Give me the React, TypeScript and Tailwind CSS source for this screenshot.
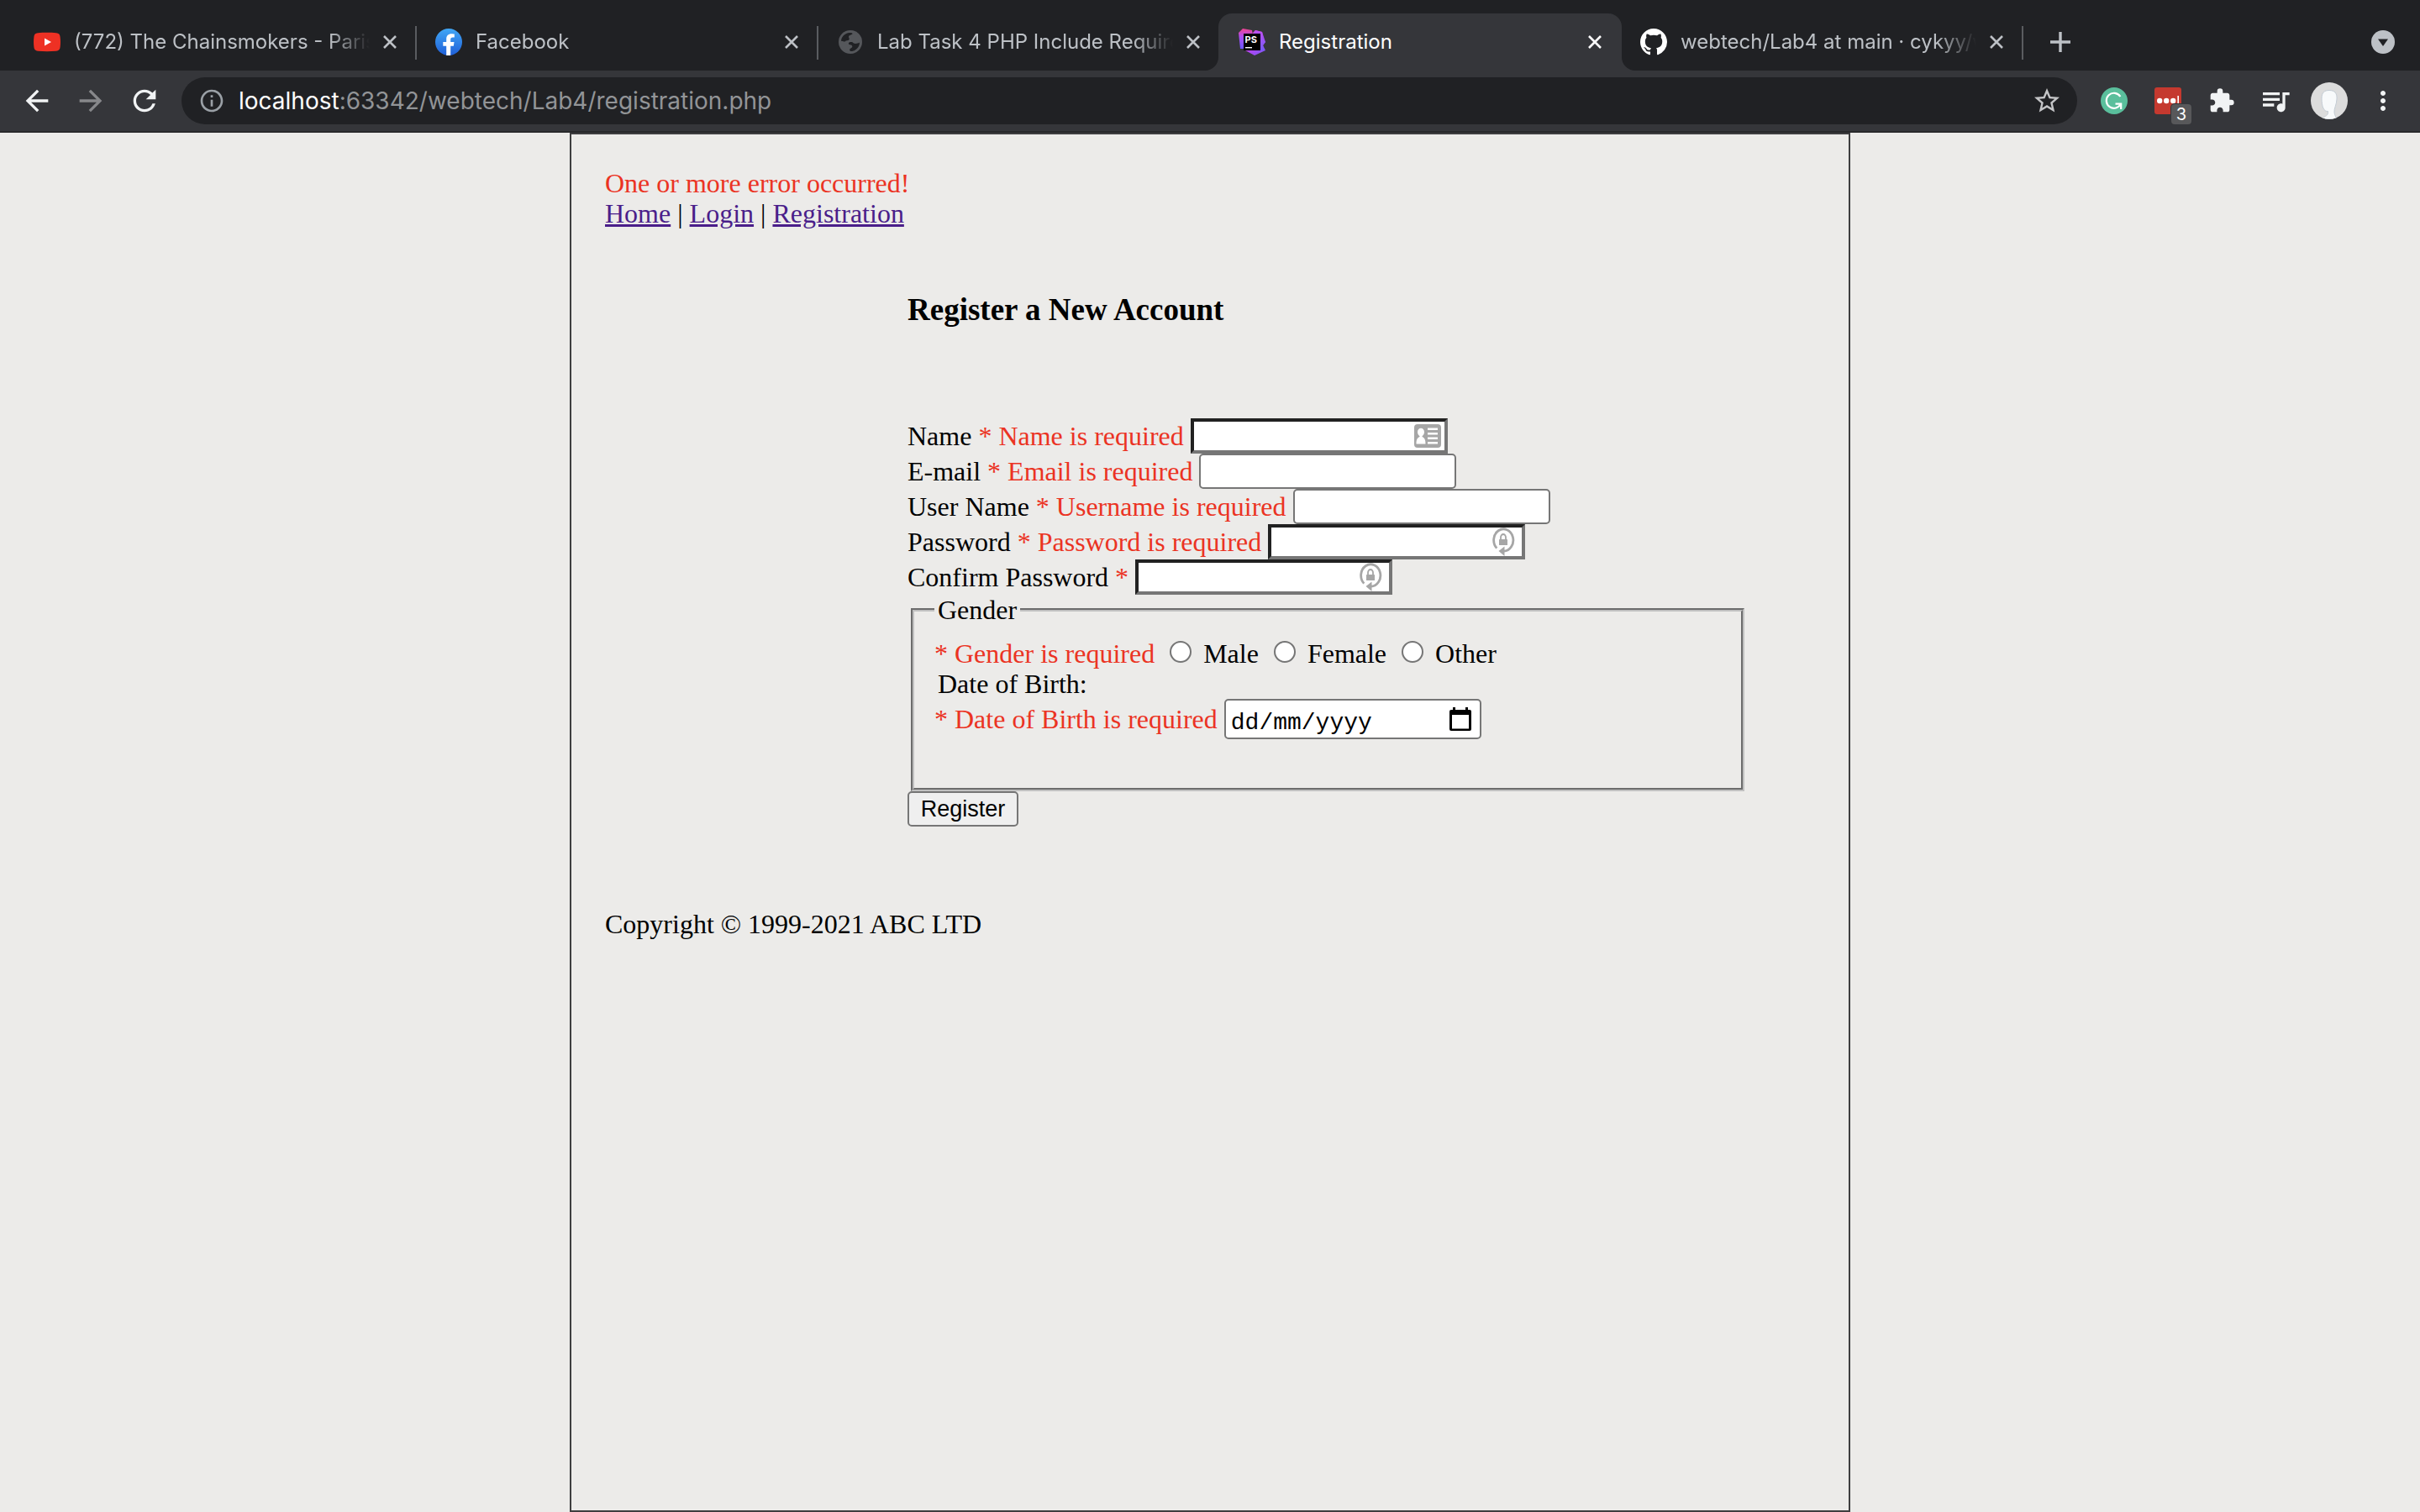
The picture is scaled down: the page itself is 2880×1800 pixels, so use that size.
import type { ReactNode } from "react";
import {
  MdArrowBack,
  MdArrowForward,
  MdRefresh,
  MdStarOutline,
  MdExtension,
  MdQueueMusic,
  MdMoreVert,
  MdInfoOutline,
} from "react-icons/md";

function CloseIcon() {
  return (
    <svg viewBox="0 0 16 16" className="size-4" fill="none" stroke="currentColor" strokeWidth="2.6">
      <path d="M1 1L15 15M15 1L1 15" />
    </svg>
  );
}

function YouTubeIcon() {
  return (
    <svg viewBox="0 0 32 32" className="size-8">
      <path
        fill="#ee3124"
        d="M5 5.3C12 4.7 20 4.7 27 5.3C30 5.6 31.3 7 31.6 10C32.1 14 32.1 18 31.6 22C31.3 25 30 26.4 27 26.7C20 27.3 12 27.3 5 26.7C2 26.4.7 25 .4 22C-.1 18-.1 14 .4 10C.7 7 2 5.6 5 5.3Z"
      />
      <path fill="#fff" d="M13 11.4L21 16L13 20.6Z" />
    </svg>
  );
}

function FacebookIcon() {
  return (
    <svg viewBox="0 0 32 32" className="size-8">
      <defs>
        <linearGradient id="fb" x1="0" y1="0" x2="0" y2="1">
          <stop offset="0" stopColor="#41a7f5" />
          <stop offset="1" stopColor="#1f5fd8" />
        </linearGradient>
      </defs>
      <circle cx="16" cy="16" r="16" fill="url(#fb)" />
      <path
        fill="#fff"
        d="M13.2 32V20.8H9.3V16.1H13.2V12.6C13.2 8.5 15.6 6.3 19.3 6.3C21 6.3 22.8 6.6 22.8 6.6V10.5H20.8C18.8 10.5 18.2 11.7 18.2 13V16.1H22.5L21.8 20.8H18.2V32Z"
      />
    </svg>
  );
}

function GlobeIcon() {
  return (
    <svg viewBox="-2 -2 32 32" className="size-8">
      <circle cx="14" cy="14" r="14" fill="#55575b" />
      <g fill="#202124">
        <path d="M3 12.500C3.500 7.500 7.500 3.600 13 3C15 3 16.500 3.200 16.500 4.200C16 5.500 12.500 5.500 12 7.500C11.700 9 13.500 9.800 12.500 11.300C11.500 12.500 8.500 12 8 13.200C7 13.500 4.500 13.600 3 12.500Z" />
        <path d="M25 14.500C25 20 20.500 24.700 15 25C13.500 25 13 24 13.300 22.800C14 21 16.500 21.500 16.300 19C16 17.200 14 17.600 12.500 17C11.500 16.300 11.800 14.600 13 14.200C15 13.600 16.800 13.800 17.600 15.200C19 16.400 22.500 16.200 25 14.500Z" />
      </g>
    </svg>
  );
}

function PhpStormIcon() {
  return (
    <svg viewBox="0 0 32 32" className="size-8">
      <defs>
        <linearGradient id="psA" x1="0" y1="0" x2="1" y2="1">
          <stop offset="0.1" stopColor="#ff4a80" />
          <stop offset="0.5" stopColor="#b345f1" />
          <stop offset="1" stopColor="#765af8" />
        </linearGradient>
        <linearGradient id="psB" x1="0" y1="0" x2="0" y2="1">
          <stop offset="0" stopColor="#c050f0" />
          <stop offset="1" stopColor="#765af8" />
        </linearGradient>
        <linearGradient id="psC" x1="0" y1="0" x2="0" y2="1">
          <stop offset="0" stopColor="#f0458f" />
          <stop offset="0.4" stopColor="#b04df5" />
          <stop offset="1" stopColor="#6b57ff" />
        </linearGradient>
      </defs>
      <path fill="url(#psA)" d="M8 26L19 32L32 26L29 20L32 16L28 4L20 2L16 6L8 8Z" />
      <path fill="url(#psC)" d="M0 5L5 0L16 2L17 8L8 10V24H2Z" />
      <path fill="url(#psB)" d="M17 6L20 2L28 4L30 13L32 16L29 20L31 26L26 26V6Z" />
      <rect x="6" y="6" width="20" height="20" fill="#000" />
      <text x="7.5" y="17" fontFamily="Inter, sans-serif" fontSize="11" fontWeight="700" fill="#fff">
        PS
      </text>
      <rect x="8" y="22" width="8" height="1.4" fill="#fff" />
    </svg>
  );
}

function GitHubIcon() {
  return (
    <svg viewBox="0 0 16 16" className="size-8" fill="#fff">
      <path d="M8 0C3.58 0 0 3.58 0 8c0 3.54 2.29 6.53 5.47 7.59.4.07.55-.17.55-.38 0-.19-.01-.82-.01-1.49-2.01.37-2.53-.49-2.69-.94-.09-.23-.48-.94-.82-1.13-.28-.15-.68-.52-.01-.53.63-.01 1.08.58 1.23.82.72 1.21 1.87.87 2.33.66.07-.52.28-.87.51-1.07-1.78-.2-3.64-.89-3.64-3.95 0-.87.31-1.59.82-2.15-.08-.2-.36-1.02.08-2.12 0 0 .67-.21 2.2.82.64-.18 1.32-.27 2-.27s1.36.09 2 .27c1.53-1.04 2.2-.82 2.2-.82.44 1.1.16 1.92.08 2.12.51.56.82 1.27.82 2.15 0 3.07-1.87 3.75-3.65 3.95.29.25.54.73.54 1.48 0 1.07-.01 1.93-.01 2.2 0 .21.15.46.55.38A8.01 8.01 0 0 0 16 8c0-4.42-3.58-8-8-8z" />
    </svg>
  );
}

type TabInfo = { title: string; icon: ReactNode; active?: boolean; rule?: boolean };

const tabs: TabInfo[] = [
  { title: "(772) The Chainsmokers - Paris", icon: <YouTubeIcon />, rule: true },
  { title: "Facebook", icon: <FacebookIcon />, rule: true },
  { title: "Lab Task 4 PHP Include Require", icon: <GlobeIcon /> },
  { title: "Registration", icon: <PhpStormIcon />, active: true },
  { title: "webtech/Lab4 at main · cykyy/w", icon: <GitHubIcon />, rule: true },
];

function TabFoot({ side }: { side: "left" | "right" }) {
  return (
    <svg
      viewBox="0 0 16 16"
      className={side === "left" ? "absolute right-full bottom-0 size-4" : "absolute bottom-0 left-full size-4 -scale-x-100"}
      fill="#35363a"
    >
      <path d="M16 0V16H0A16 16 0 0 0 16 0Z" />
    </svg>
  );
}

function Tab({ title, icon, active, rule }: TabInfo) {
  return (
    <div
      className={
        active
          ? "relative -mr-0.5 flex h-[68px] w-[480px] min-w-0 items-center rounded-t-2xl bg-[#35363a] pr-5 pl-6 text-white"
          : "relative flex h-[68px] w-[478px] min-w-0 items-center pr-[18px] pl-6 text-[#bdc1c6]"
      }
    >
      {active && <TabFoot side="left" />}
      <span className="shrink-0">{icon}</span>
      <span
        className={
          active
            ? "ml-4 min-w-0 flex-1 overflow-hidden text-[24px] leading-8 whitespace-nowrap"
            : "ml-4 min-w-0 flex-1 overflow-hidden [mask-image:linear-gradient(to_right,#000_calc(100%-48px),transparent)] text-[24px] leading-8 whitespace-nowrap"
        }
      >
        {title}
      </span>
      <button type="button" aria-label={`Close ${title}`} className="ml-3 flex size-6 shrink-0 items-center justify-center">
        <CloseIcon />
      </button>
      {rule && <span className="absolute top-[15px] -right-0.5 h-10 w-[2px] bg-[#5a5c60]" />}
      {active && <TabFoot side="right" />}
    </div>
  );
}

function TabStrip() {
  return (
    <div className="flex h-[84px] items-end bg-[#202124] pl-4">
      {tabs.map((t) => (
        <Tab key={t.title} {...t} />
      ))}
      <button type="button" aria-label="New tab" className="mb-[22px] ml-[34px] text-[#bdc1c6]">
        <svg viewBox="0 0 24 24" className="size-6" stroke="currentColor" strokeWidth="3.4">
          <path d="M12 0V24M0 12H24" />
        </svg>
      </button>
      <button type="button" aria-label="Search tabs" className="mr-[30px] mb-5 ml-auto">
        <svg viewBox="0 0 28 28" className="size-7">
          <circle cx="14" cy="14" r="14" fill="#bdc1c6" />
          <path d="M8 10.4H20L14 19Z" fill="#202124" />
        </svg>
      </button>
    </div>
  );
}

function GrammarlyIcon() {
  return (
    <svg viewBox="0 0 32 32" className="size-8" fill="none" stroke="#fff" strokeWidth="2.2">
      <circle cx="16" cy="16" r="16" fill="#5abf9c" stroke="none" />
      <path d="M23.4 11A9 9 0 1 0 24 19.4" />
      <path d="M17.5 19.6H24.2V26" />
    </svg>
  );
}

function PasswordManagerIcon() {
  return (
    <span className="relative block size-8">
      <svg viewBox="0 0 32 32" className="size-8">
        <rect width="32" height="32" rx="3" fill="#c5392f" />
        <g fill="#fff">
          <circle cx="6.2" cy="16" r="3.2" />
          <circle cx="14.2" cy="16" r="3.2" />
          <circle cx="22.2" cy="16" r="3.2" />
          <rect x="27.4" y="10" width="1.6" height="12" />
        </g>
      </svg>
      <span className="absolute top-5 left-5 flex h-6 w-6 items-center justify-center rounded bg-[#58585a] text-[20px] leading-6 text-white ring-1 ring-[#35363a]">
        3
      </span>
    </span>
  );
}

function Avatar() {
  return (
    <svg viewBox="0 0 44 44" className="size-11">
      <clipPath id="face">
        <circle cx="22" cy="22" r="22" />
      </clipPath>
      <circle cx="22" cy="22" r="22" fill="#dcdcdc" />
      <g clipPath="url(#face)">
        <path
          d="M13 19C13 12.500 16 9.500 22 9.500C28.500 9.500 31.500 13 31 20C30.700 27 27.500 31 28 36C28.300 39 30 41 31 44H12.500C15 41 20.500 40 20.500 36.500V34.500C15.500 35 13 29 13 19Z"
          fill="#f8fafb"
          stroke="#c3cbd3"
          strokeWidth="1"
        />
      </g>
    </svg>
  );
}

function Toolbar() {
  return (
    <div className="flex h-[74px] items-center border-b-2 border-[#28292b] bg-[#35363a] text-[#f1f3f4]">
      <button type="button" aria-label="Back" className="ml-6">
        <MdArrowBack className="size-10" />
      </button>
      <button type="button" aria-label="Forward" className="ml-6 text-[#87888b]">
        <MdArrowForward className="size-10" />
      </button>
      <button type="button" aria-label="Reload" className="ml-6">
        <MdRefresh className="size-10" />
      </button>
      <div className="ml-6 flex h-14 min-w-0 flex-1 items-center rounded-full bg-[#202124] pr-[18px] pl-5">
        <MdInfoOutline className="size-8 shrink-0 text-[#9aa0a6]" />
        <div className="ml-4 min-w-0 flex-1 text-[28px] leading-10">
          <span className="text-white">localhost</span>
          <span className="text-[#929497]">:63342/webtech/Lab4/registration.php</span>
        </div>
        <button type="button" aria-label="Bookmark this page" className="text-[#c4c5c7]">
          <MdStarOutline className="size-9" />
        </button>
      </div>
      <div className="mr-[26px] ml-7 flex items-center">
        <button type="button" aria-label="Grammarly">
          <GrammarlyIcon />
        </button>
        <button type="button" aria-label="Password manager" className="ml-8">
          <PasswordManagerIcon />
        </button>
        <button type="button" aria-label="Extensions" className="ml-8">
          <MdExtension className="size-8" />
        </button>
        <button type="button" aria-label="Media controls" className="ml-7">
          <MdQueueMusic className="size-10" />
        </button>
        <button type="button" aria-label="Profile" className="ml-[22px]">
          <Avatar />
        </button>
        <button type="button" aria-label="Menu" className="ml-6">
          <MdMoreVert className="size-9" />
        </button>
      </div>
    </div>
  );
}

function CardIcon() {
  return (
    <svg viewBox="0 0 32 28" className="h-7 w-8">
      <rect width="32" height="28" rx="4" fill="#a6a6a6" />
      <g fill="#fff">
        <ellipse cx="8" cy="9.5" rx="4" ry="4.8" />
        <path d="M6.500 12H9.500V15C12.500 16.500 13.500 18.500 13.500 23.500H2.500C2.500 18.500 3.500 16.500 6.500 15Z" />
        <path d="M16 4.500H28V7H16ZM16 10H28V12.500H16ZM16 15.500H28V18H16ZM16 21H28V23.500H16Z" />
      </g>
    </svg>
  );
}

function LockIcon() {
  return (
    <svg viewBox="0 0 28 34" className="h-[34px] w-7" fill="none" stroke="#a6a6a6" strokeWidth="2.8">
      <path d="M6.300 24.600A11.600 13.200 0 1 1 14.500 28.200" />
      <path d="M8.500 28L15.500 22.500V34Z" fill="#a6a6a6" stroke="none" />
      <rect x="9" y="14" width="10" height="7" rx="0.6" fill="#a6a6a6" stroke="none" />
      <path d="M11 15V11.500A3 3.500 0 0 1 17 11.500V15" strokeWidth="1.8" />
    </svg>
  );
}

type FieldInfo = {
  id: string;
  label: string;
  error: string;
  type: string;
  icon?: ReactNode;
};

const fields: FieldInfo[] = [
  { id: "name", label: "Name", error: "* Name is required", type: "text", icon: <CardIcon /> },
  { id: "email", label: "E-mail", error: "* Email is required", type: "text" },
  { id: "username", label: "User Name", error: "* Username is required", type: "text" },
  { id: "password", label: "Password", error: "* Password is required", type: "password", icon: <LockIcon /> },
  { id: "confirm", label: "Confirm Password", error: "*", type: "password", icon: <LockIcon /> },
];

function Field({ id, label, error, type, icon }: FieldInfo) {
  return (
    <div className="flex h-[42px] items-center gap-2">
      <label htmlFor={id}>{label}</label>
      <span className="text-[#eb3323]">{error}</span>
      <span className="relative flex">
        <input
          id={id}
          type={type}
          className={
            icon
              ? "h-[42px] w-[306px] border-4 border-t-[#212121] border-r-[#767676] border-b-[#767676] border-l-[#212121] bg-white px-1"
              : "h-[42px] w-[306px] rounded-[5px] border-2 border-[#767676] bg-white px-1"
          }
        />
        {icon && (
          <span
            className={
              type === "password"
                ? "absolute inset-y-0 right-3 flex items-center"
                : "absolute inset-y-0 right-2 flex items-center"
            }
          >
            {icon}
          </span>
        )}
      </span>
    </div>
  );
}

function CalendarIcon() {
  return (
    <svg viewBox="0 0 26 28" className="h-7 w-[26px]">
      <path
        fillRule="evenodd"
        d="M4 0H7V3H19V0H22V3H24A2 2 0 0 1 26 5V26A2 2 0 0 1 24 28H2A2 2 0 0 1 0 26V5A2 2 0 0 1 2 3H4ZM3 9V25.500H23V9Z"
      />
    </svg>
  );
}

function RegistrationForm() {
  return (
    <form className="mt-[108px] ml-[25%] w-[1000px] max-w-full" onSubmit={(e) => e.preventDefault()}>
      {fields.map((f) => (
        <Field key={f.id} {...f} />
      ))}
      <fieldset className="mx-1 h-[234px] border-4 [border-style:groove] border-[#c0c0c0] px-6">
        <legend className="px-1 leading-9">Gender</legend>
        <div className="mt-4 flex h-9 items-center">
          <span className="text-[#eb3323]">* Gender is required</span>
          {["Male", "Female", "Other"].map((g) => (
            <label key={g} className="flex items-center">
              <input
                type="radio"
                name="gender"
                className="mr-[14px] mb-1 ml-[18px] size-[26px] appearance-none rounded-full border-2 border-[#767676] bg-white"
              />
              {g}
            </label>
          ))}
        </div>
        <label htmlFor="dob" className="block pl-1 leading-9">
          Date of Birth:
        </label>
        <div className="flex h-12 items-center gap-2">
          <span className="text-[#eb3323]">* Date of Birth is required</span>
          <span className="relative flex">
            <input
              id="dob"
              type="text"
              placeholder="dd/mm/yyyy"
              className="h-12 w-[306px] rounded-[5px] border-2 border-[#767676] bg-white px-1.5 pt-2 font-['Liberation_Mono',monospace] text-[28px] leading-8 placeholder:text-black"
            />
            <button type="button" aria-label="Show date picker" className="absolute inset-y-0 right-3 flex items-center">
              <CalendarIcon />
            </button>
          </span>
        </div>
      </fieldset>
      <button
        type="submit"
        className="block h-[42px] w-[132px] rounded-[5px] border-2 border-[#767676] bg-[#efefef] font-['Liberation_Sans',sans-serif] text-[27px] leading-9"
      >
        Register
      </button>
    </form>
  );
}

export default function App() {
  return (
    <div className="flex min-h-screen flex-col bg-[#ecebe9] font-[Inter,sans-serif]">
      <TabStrip />
      <Toolbar />
      <main className="mx-auto w-full max-w-[1524px] flex-1 border-2 border-[#3e3e3f] p-10 font-['Liberation_Serif',serif] text-[32px] leading-9 text-black">
        <p className="text-[#eb3323]">One or more error occurred!</p>
        <nav>
          <a href="#home" className="text-[#4a1e8a] underline">
            Home
          </a>{" "}
          |{" "}
          <a href="#login" className="text-[#4a1e8a] underline">
            Login
          </a>{" "}
          |{" "}
          <a href="#registration" className="text-[#4a1e8a] underline">
            Registration
          </a>
        </nav>
        <h3 className="mt-[76px] ml-[25%] text-[37px] leading-[42px] font-bold">Register a New Account</h3>
        <RegistrationForm />
        <footer className="mt-[98px]">Copyright © 1999-2021 ABC LTD</footer>
      </main>
    </div>
  );
}
